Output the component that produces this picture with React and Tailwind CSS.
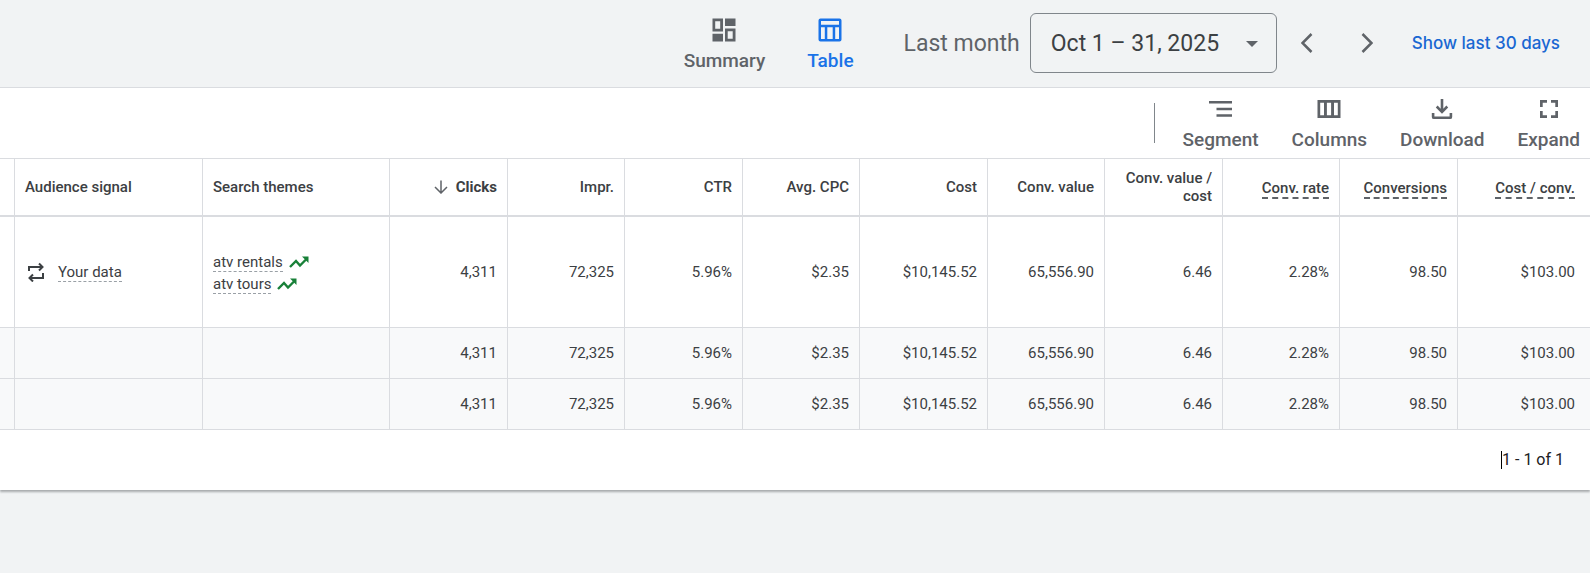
import React from "react";

const columns = [
    {label: "Clicks", width: "w-[118px]", sorted: true},
    {label: "Impr.", width: "w-[117px]"},
    {label: "CTR", width: "w-[118px]"},
    {label: "Avg. CPC", width: "w-[117px]"},
    {label: "Cost", width: "w-[128px]"},
    {label: "Conv. value", width: "w-[117px]"},
    {label: "Conv. value / cost", width: "w-[118px]"},
    {label: "Conv. rate", width: "w-[117px]", hint: true},
    {label: "Conversions", width: "w-[118px]", hint: true},
    {label: "Cost / conv.", width: "w-auto", hint: true},
];

const metrics = ["4,311", "72,325", "5.96%", "$2.35", "$10,145.52", "65,556.90", "6.46", "2.28%", "98.50", "$103.00"];

const searchThemes = ["atv rentals", "atv tours"];

function Icon({children}) {
    return (
        <svg viewBox="0 0 24 24" fill="currentColor" aria-hidden="true" className="size-6">
            {children}
        </svg>
    );
}

function SummaryIcon() {
    return (
        <Icon>
            <path
                fillRule="evenodd"
                d="M0.5 0.5h10.5v13H0.5zM3.2 3.2v7.6h5V3.2zM13 0.5h10.5v7.5H13zM0.5 15.8h10.5v7.7H0.5zM13 10.5h10.5v13H13zM15.7 13.2v7.6h5v-7.6z"
            />
        </Icon>
    );
}

function TableIcon() {
    return (
        <Icon>
            <path
                fillRule="evenodd"
                d="M2.5 0.5h19a2 2 0 0 1 2 2v19a2 2 0 0 1-2 2h-19a2 2 0 0 1-2-2v-19a2 2 0 0 1 2-2zM3 3v3.8h18V3zM3 9.3V21h3.8V9.3zM9.3 9.3V21h5.4V9.3zM17.2 9.3V21H21V9.3z"
            />
        </Icon>
    );
}

function SegmentIcon() {
    return (
        <Icon>
            <path d="M0 4h23v2.5H0zM7.500 10.800H23v2.500H7.500zM7.500 17.300H23v2.500H7.500z" />
        </Icon>
    );
}

function ColumnsIcon() {
    return (
        <Icon>
            <path
                fillRule="evenodd"
                d="M0.5 3h23v18H0.5zM3.2 5.700v12.600h3.800V5.700zM9.900 5.700v12.600h4.200V5.700zM17 5.700v12.600h3.800V5.700z"
            />
        </Icon>
    );
}

function DownloadIcon() {
    return (
        <Icon>
            <path d="M10.7 2h2.6v9.7l3.1-3.1 1.8 1.9L12 16.7l-6.2-6.2 1.8-1.9 3.1 3.1z" />
            <path d="M1.8 16h2.6v3.4h15.2V16h2.6v3.9a2.2 2.2 0 0 1-2.2 2.2H4a2.2 2.2 0 0 1-2.2-2.2z" />
        </Icon>
    );
}

function ExpandIcon() {
    return (
        <Icon>
            <path d="M3 3h7v2.7H5.7V10H3zM14 3h7v7h-2.7V5.7H14zM3 14h2.7v4.3H10V21H3zM18.3 14H21v7h-7v-2.7h4.3z" />
        </Icon>
    );
}

function RepeatIcon() {
    return (
        <svg viewBox="0 0 18 20" fill="none" stroke="currentColor" strokeWidth="2" aria-hidden="true" className="h-5 w-[18px]">
            <path d="M2 9V5h13M12 1.5 15.5 5 12 8.5" />
            <path d="M16 11v5H3M6 12.5 2.5 16 6 19.5" />
        </svg>
    );
}

function TrendIcon() {
    return (
        <svg viewBox="0 0 20 12" fill="none" stroke="currentColor" strokeWidth="2.4" aria-hidden="true" className="h-3 w-5 text-[#188038]">
            <path d="M1 11 7 5l4 4.5L17.5 3" />
            <path d="M13 0.5h6.5V7z" fill="currentColor" stroke="none" />
        </svg>
    );
}

function ArrowDownIcon() {
    return (
        <svg viewBox="0 0 14 14" fill="none" stroke="currentColor" strokeWidth="1.5" aria-hidden="true" className="size-3.5 text-[#5f6368]">
            <path d="M7 0.5v12M1 7l6 6 6-6" />
        </svg>
    );
}

function Chevron({d}) {
    return (
        <svg viewBox="0 0 12 20" fill="none" stroke="currentColor" strokeWidth="2.5" aria-hidden="true" className="h-5 w-3">
            <path d={d} />
        </svg>
    );
}

function IconButton({icon, label, active}) {
    return (
        <button
            type="button"
            className={`flex flex-col items-center gap-1.5 text-[19px] leading-[26px] font-medium ${active ? "text-[#1a73e8]" : "text-[#5f6368]"}`}
        >
            {icon}
            {label}
        </button>
    );
}

function TopBar() {
    return (
        <header className="flex h-[87px] items-start justify-end pr-[30px] text-[23px] text-[#5f6368]">
            <div className="flex gap-[42px] pt-[18px]">
                <IconButton icon={<SummaryIcon />} label="Summary" />
                <IconButton icon={<TableIcon />} label="Table" active />
            </div>
            <div className="flex items-center pt-[13px]">
                <span className="ml-[50px] pt-0.5">Last month</span>
                <button
                    type="button"
                    className="ml-[10px] flex h-[60px] w-[247px] items-center justify-between rounded-md border border-[#80868b] pt-0.5 pr-[18px] pl-5 text-[#3c4043]"
                >
                    Oct 1 – 31, 2025
                    <svg viewBox="0 0 12 6" fill="#5f6368" aria-hidden="true" className="h-1.5 w-3">
                        <path d="M0 0h12L6 6z" />
                    </svg>
                </button>
                <button type="button" aria-label="Previous period" className="ml-6">
                    <Chevron d="M10.5 1 1.5 10l9 9" />
                </button>
                <button type="button" aria-label="Next period" className="ml-12">
                    <Chevron d="M1.5 1l9 9-9 9" />
                </button>
                <a href="#last-30-days" className="ml-[39px] pt-px font-['Inter',sans-serif] text-[17px] font-medium text-[#1967d2]">
                    Show last 30 days
                </a>
            </div>
        </header>
    );
}

function Toolbar() {
    return (
        <div className="flex h-[70px] items-start justify-end gap-[33px] pt-[9px] pr-2.5">
            <div className="mt-1.5 -mr-1.5 h-10 w-px bg-[#80868b]" />
            <IconButton icon={<SegmentIcon />} label="Segment" />
            <IconButton icon={<ColumnsIcon />} label="Columns" />
            <IconButton icon={<DownloadIcon />} label="Download" />
            <IconButton icon={<ExpandIcon />} label="Expand" />
        </div>
    );
}

function MetricCells() {
    return metrics.map((value, i) => (
        <td key={columns[i].label} className="border-r border-[#dadce0] px-2.5 text-right last:border-r-0 last:pr-[15px]">
            {value}
        </td>
    ));
}

function ReportTable() {
    return (
        <table className="w-full table-fixed border-separate border-spacing-0 text-[15px] leading-[18px] text-[#3c4043]">
            <thead>
                <tr className="h-[59px] *:border-b-2 *:border-[#dadce0] *:font-medium">
                    <td className="w-[15px] border-t border-r" />
                    <th scope="col" className="w-[188px] border-t border-r px-2.5 text-left">Audience signal</th>
                    <th scope="col" className="w-[187px] border-t border-r px-2.5 text-left">Search themes</th>
                    {columns.map((col) => (
                        <th
                            key={col.label}
                            scope="col"
                            className={`${col.width} border-t border-r px-2.5 text-right last:border-r-0 last:pr-[15px]`}
                        >
                            {col.sorted ? (
                                <button type="button" className="inline-flex items-center gap-2 pt-px font-bold">
                                    <ArrowDownIcon />
                                    {col.label}
                                </button>
                            ) : (
                                <span className={col.hint ? "inline-block border-b-2 border-dashed border-[#5f6368] pt-1" : ""}>
                                    {col.label}
                                </span>
                            )}
                        </th>
                    ))}
                </tr>
            </thead>
            <tbody>
                <tr className="h-[111px] *:border-b *:border-[#dadce0]">
                    <td className="border-r" />
                    <td className="border-r px-3">
                        <div className="flex items-center gap-[13px]">
                            <RepeatIcon />
                            <span className="border-b border-dashed border-[#9aa0a6]">Your data</span>
                        </div>
                    </td>
                    <td className="border-r px-2.5">
                        <ul className="flex flex-col gap-[3px] pt-0.5">
                            {searchThemes.map((theme) => (
                                <li key={theme} className="flex items-center gap-1.5">
                                    <span className="border-b border-dashed border-[#9aa0a6]">{theme}</span>
                                    <TrendIcon />
                                </li>
                            ))}
                        </ul>
                    </td>
                    <MetricCells />
                </tr>
                {["subtotal", "total"].map((row) => (
                    <tr key={row} className="h-[51px] bg-[#f8f9fa] *:border-b *:border-[#dadce0]">
                        <td className="border-r" />
                        <td className="border-r" />
                        <td className="border-r" />
                        <MetricCells />
                    </tr>
                ))}
            </tbody>
        </table>
    );
}

function App() {
    return (
        <div className="min-h-screen bg-[#f1f3f4] font-['Roboto',sans-serif]">
            <TopBar />
            <main className="border-t border-[#dadce0] bg-white shadow-[0_2px_2px_rgba(60,64,67,0.4)]">
                <Toolbar />
                <ReportTable />
                <div className="flex h-[60px] items-center justify-end pr-[26px] text-base text-[#202124]">
                    <span className="border-l border-black leading-[18px]">1 - 1 of 1</span>
                </div>
            </main>
        </div>
    );
}

export default App;
